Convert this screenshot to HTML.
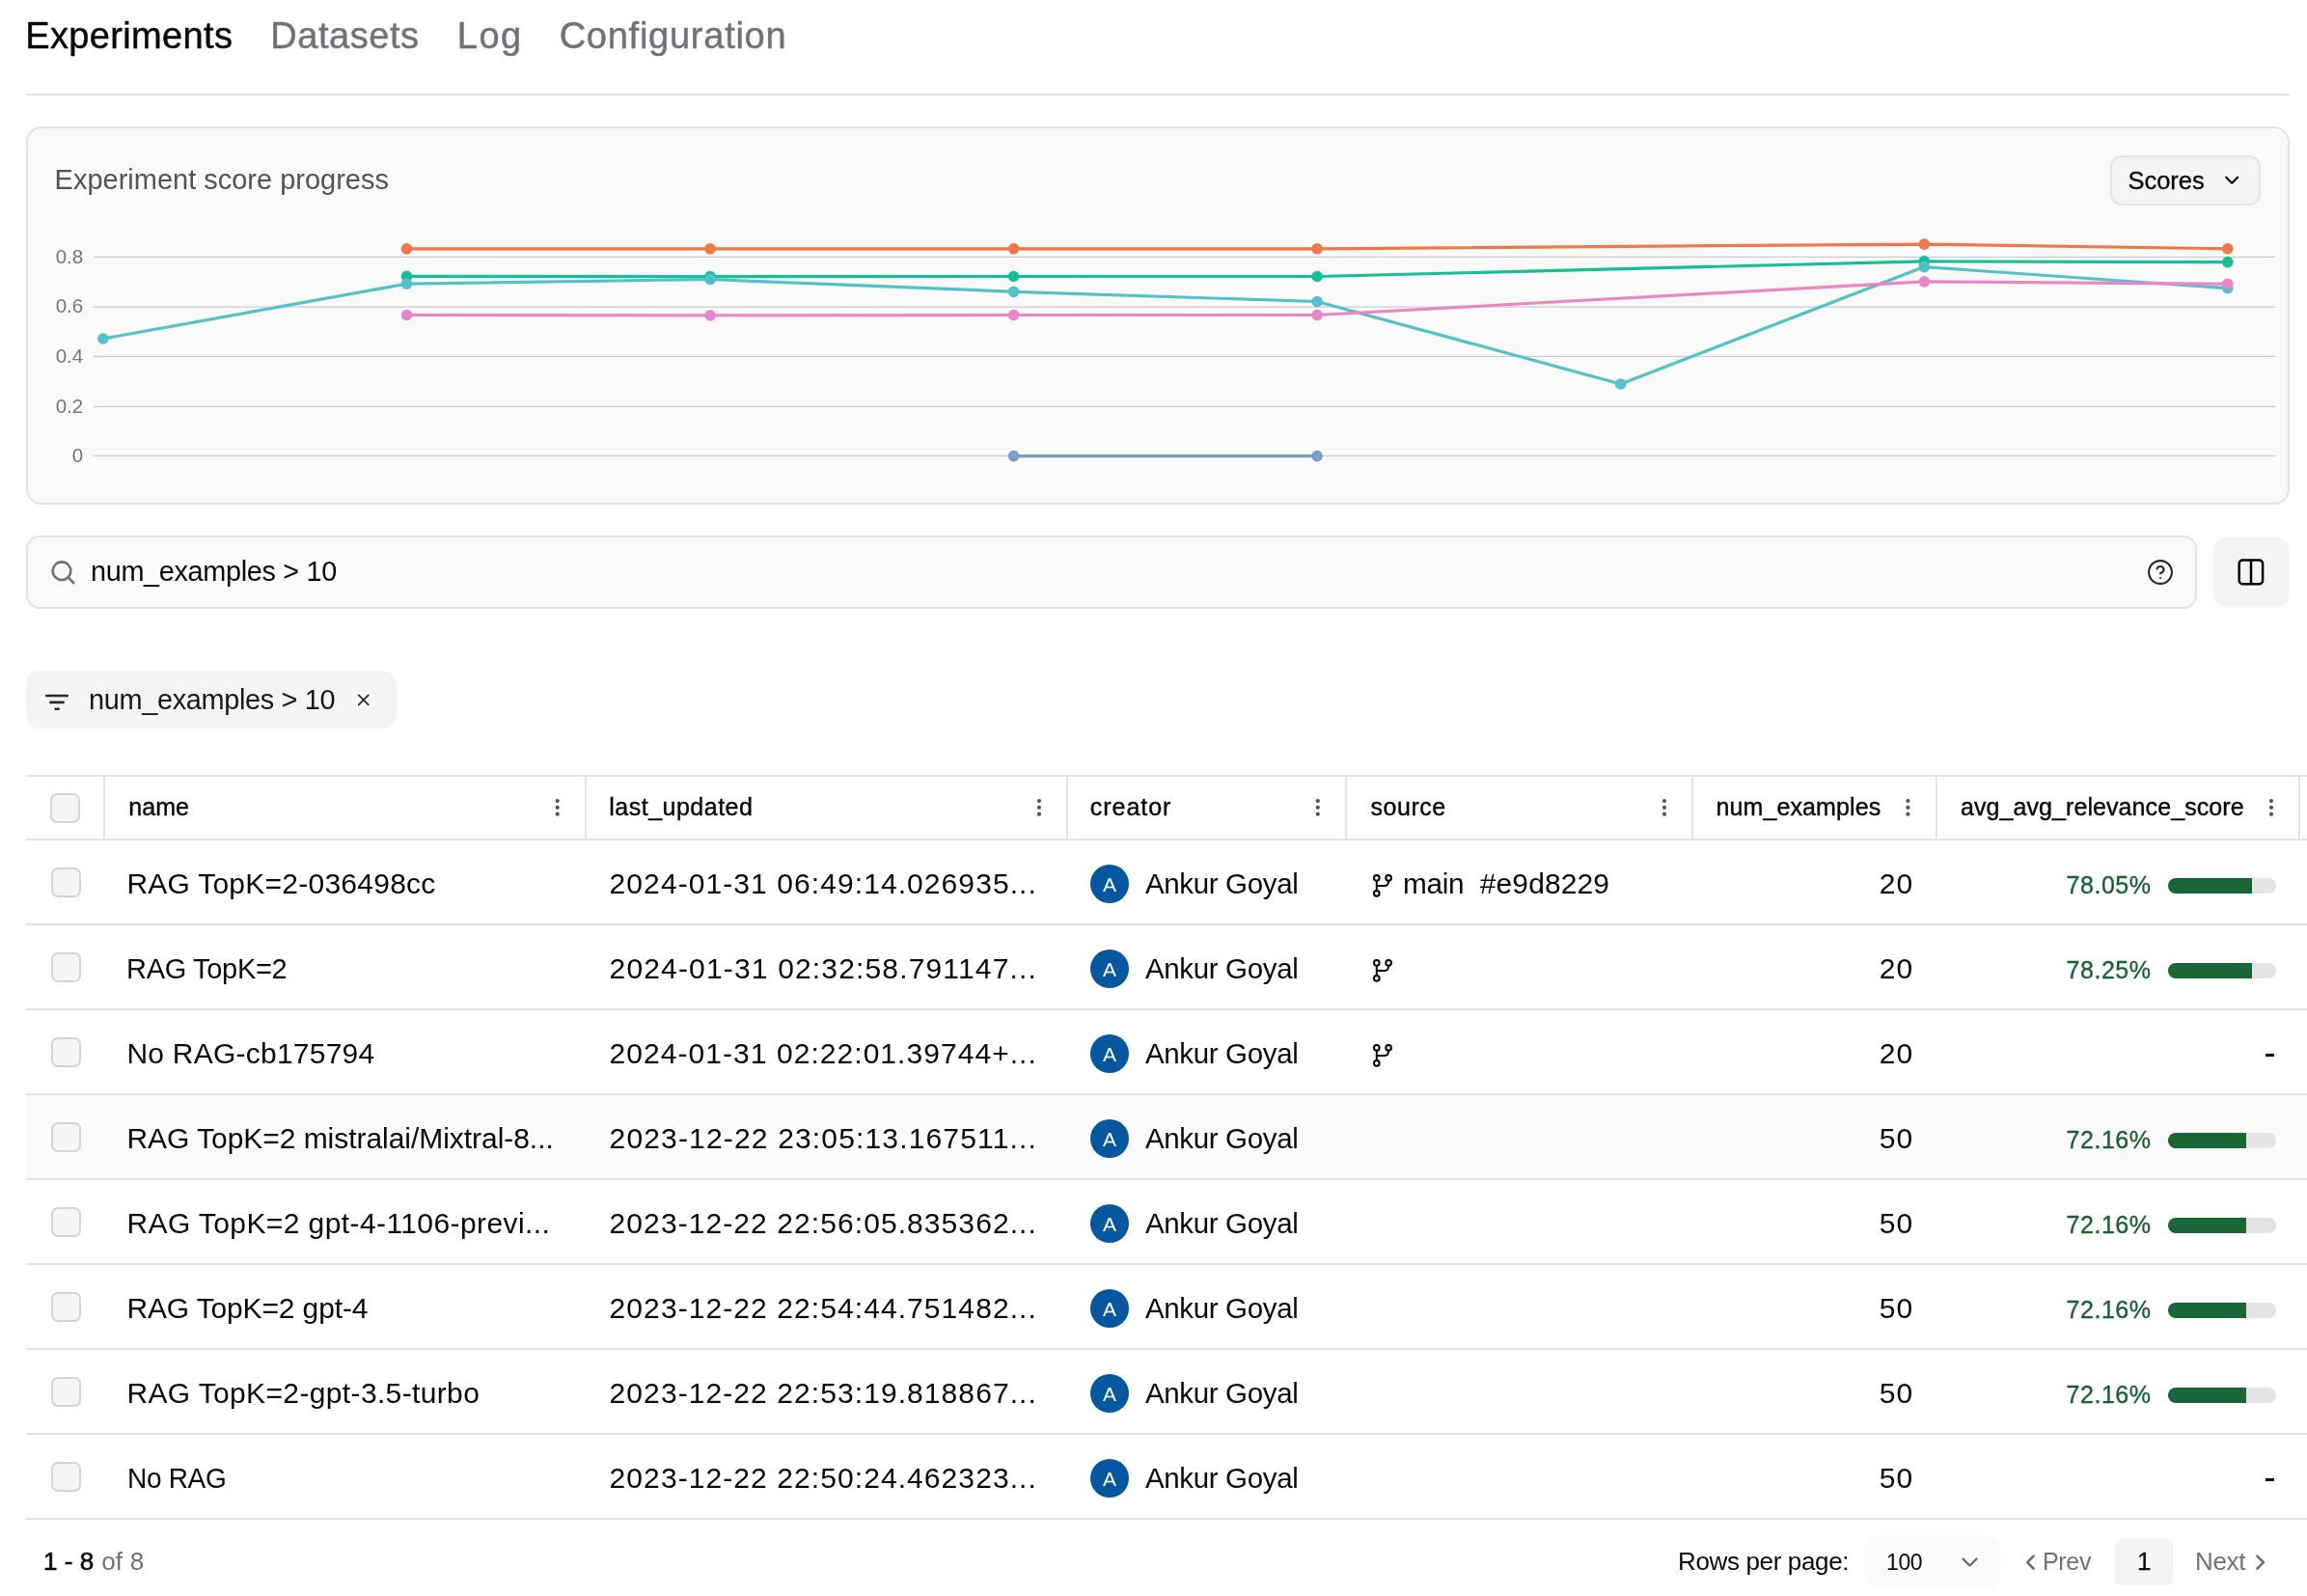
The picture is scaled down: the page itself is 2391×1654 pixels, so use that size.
<!DOCTYPE html>
<html><head><meta charset="utf-8"><title>Experiments</title>
<style>
html,body{margin:0;padding:0;overflow:hidden}
body{width:2391px;height:1654px;position:relative;overflow:hidden;background:#fff;font-family:"Liberation Sans",sans-serif;color:#09090b;-webkit-font-smoothing:antialiased}
#txt{position:absolute;left:0;top:0;width:2391px;height:1654px;will-change:transform}
</style></head><body>
<div style="position:absolute;left:27px;top:97px;width:2346px;height:2px;background:#e4e4e7"></div><div style="position:absolute;left:27px;top:131px;width:2346px;height:392px;box-sizing:border-box;border:2px solid #e4e4e7;border-radius:16px;background:#fafafa"></div><div style="position:absolute;left:2187px;top:161px;width:156px;height:52px;box-sizing:border-box;border:2px solid #e4e4e7;border-radius:12px;background:#f4f4f5"></div><div style="position:absolute;left:27px;top:555px;width:2250px;height:76px;box-sizing:border-box;border:2px solid #e4e4e7;border-radius:14px;background:#fafafa"></div><div style="position:absolute;left:2293px;top:557px;width:80px;height:72px;border-radius:14px;background:#f4f4f5"></div><div style="position:absolute;left:27px;top:695px;width:384px;height:60px;border-radius:14px;background:#f4f4f5"></div><div style="position:absolute;left:27px;top:803px;width:2364px;height:2px;background:#e4e4e7"></div><div style="position:absolute;left:27px;top:869px;width:2364px;height:2px;background:#e4e4e7"></div><div style="position:absolute;left:27px;top:957px;width:2364px;height:2px;background:#e4e4e7"></div><div style="position:absolute;left:27px;top:1045px;width:2364px;height:2px;background:#e4e4e7"></div><div style="position:absolute;left:27px;top:1133px;width:2364px;height:2px;background:#e4e4e7"></div><div style="position:absolute;left:27px;top:1221px;width:2364px;height:2px;background:#e4e4e7"></div><div style="position:absolute;left:27px;top:1309px;width:2364px;height:2px;background:#e4e4e7"></div><div style="position:absolute;left:27px;top:1397px;width:2364px;height:2px;background:#e4e4e7"></div><div style="position:absolute;left:27px;top:1485px;width:2364px;height:2px;background:#e4e4e7"></div><div style="position:absolute;left:27px;top:1573px;width:2364px;height:2px;background:#e4e4e7"></div><div style="position:absolute;left:27px;top:1135px;width:2364px;height:86px;background:#fafafa"></div><div style="position:absolute;left:107px;top:805px;width:2px;height:64px;background:#e4e4e7"></div><div style="position:absolute;left:606px;top:805px;width:2px;height:64px;background:#e4e4e7"></div><div style="position:absolute;left:1105px;top:805px;width:2px;height:64px;background:#e4e4e7"></div><div style="position:absolute;left:1394px;top:805px;width:2px;height:64px;background:#e4e4e7"></div><div style="position:absolute;left:1753px;top:805px;width:2px;height:64px;background:#e4e4e7"></div><div style="position:absolute;left:2006px;top:805px;width:2px;height:64px;background:#e4e4e7"></div><div style="position:absolute;left:2382px;top:805px;width:2px;height:64px;background:#e4e4e7"></div><div style="position:absolute;left:51.5px;top:821.5px;width:31px;height:31px;box-sizing:border-box;border:2px solid #d4d4d8;border-radius:7px;background:#f4f4f5"></div><div style="position:absolute;left:52.5px;top:898.5px;width:31px;height:31px;box-sizing:border-box;border:2px solid #d4d4d8;border-radius:7px;background:#f4f4f5"></div><div style="position:absolute;left:52.5px;top:986.5px;width:31px;height:31px;box-sizing:border-box;border:2px solid #d4d4d8;border-radius:7px;background:#f4f4f5"></div><div style="position:absolute;left:52.5px;top:1074.5px;width:31px;height:31px;box-sizing:border-box;border:2px solid #d4d4d8;border-radius:7px;background:#f4f4f5"></div><div style="position:absolute;left:52.5px;top:1162.5px;width:31px;height:31px;box-sizing:border-box;border:2px solid #d4d4d8;border-radius:7px;background:#f4f4f5"></div><div style="position:absolute;left:52.5px;top:1250.5px;width:31px;height:31px;box-sizing:border-box;border:2px solid #d4d4d8;border-radius:7px;background:#f4f4f5"></div><div style="position:absolute;left:52.5px;top:1338.5px;width:31px;height:31px;box-sizing:border-box;border:2px solid #d4d4d8;border-radius:7px;background:#f4f4f5"></div><div style="position:absolute;left:52.5px;top:1426.5px;width:31px;height:31px;box-sizing:border-box;border:2px solid #d4d4d8;border-radius:7px;background:#f4f4f5"></div><div style="position:absolute;left:52.5px;top:1514.5px;width:31px;height:31px;box-sizing:border-box;border:2px solid #d4d4d8;border-radius:7px;background:#f4f4f5"></div><div style="position:absolute;left:1129.7px;top:895.80px;width:40px;height:40px;border-radius:50%;background:#0558a0;color:#fff;font-size:21px;line-height:41.4px;text-align:center;will-change:transform">A</div><div style="position:absolute;left:1129.7px;top:983.80px;width:40px;height:40px;border-radius:50%;background:#0558a0;color:#fff;font-size:21px;line-height:41.4px;text-align:center;will-change:transform">A</div><div style="position:absolute;left:1129.7px;top:1071.80px;width:40px;height:40px;border-radius:50%;background:#0558a0;color:#fff;font-size:21px;line-height:41.4px;text-align:center;will-change:transform">A</div><div style="position:absolute;left:1129.7px;top:1159.80px;width:40px;height:40px;border-radius:50%;background:#0558a0;color:#fff;font-size:21px;line-height:41.4px;text-align:center;will-change:transform">A</div><div style="position:absolute;left:1129.7px;top:1247.80px;width:40px;height:40px;border-radius:50%;background:#0558a0;color:#fff;font-size:21px;line-height:41.4px;text-align:center;will-change:transform">A</div><div style="position:absolute;left:1129.7px;top:1335.80px;width:40px;height:40px;border-radius:50%;background:#0558a0;color:#fff;font-size:21px;line-height:41.4px;text-align:center;will-change:transform">A</div><div style="position:absolute;left:1129.7px;top:1423.80px;width:40px;height:40px;border-radius:50%;background:#0558a0;color:#fff;font-size:21px;line-height:41.4px;text-align:center;will-change:transform">A</div><div style="position:absolute;left:1129.7px;top:1511.80px;width:40px;height:40px;border-radius:50%;background:#0558a0;color:#fff;font-size:21px;line-height:41.4px;text-align:center;will-change:transform">A</div><div style="position:absolute;left:2246.6px;top:910px;width:112.3px;height:16px;border-radius:8px;background:#e4e4e7;overflow:hidden"><div style="width:87.65px;height:16px;background:#1b6637"></div></div><div style="position:absolute;left:2246.6px;top:998px;width:112.3px;height:16px;border-radius:8px;background:#e4e4e7;overflow:hidden"><div style="width:87.87px;height:16px;background:#1b6637"></div></div><div style="position:absolute;left:2246.6px;top:1174px;width:112.3px;height:16px;border-radius:8px;background:#e4e4e7;overflow:hidden"><div style="width:81.04px;height:16px;background:#1b6637"></div></div><div style="position:absolute;left:2246.6px;top:1262px;width:112.3px;height:16px;border-radius:8px;background:#e4e4e7;overflow:hidden"><div style="width:81.04px;height:16px;background:#1b6637"></div></div><div style="position:absolute;left:2246.6px;top:1350px;width:112.3px;height:16px;border-radius:8px;background:#e4e4e7;overflow:hidden"><div style="width:81.04px;height:16px;background:#1b6637"></div></div><div style="position:absolute;left:2246.6px;top:1438px;width:112.3px;height:16px;border-radius:8px;background:#e4e4e7;overflow:hidden"><div style="width:81.04px;height:16px;background:#1b6637"></div></div><div style="position:absolute;left:2348px;top:1092.2px;width:8.8px;height:2.6px;background:#09090b"></div><div style="position:absolute;left:2348px;top:1532.2px;width:8.8px;height:2.6px;background:#09090b"></div><div style="position:absolute;left:1932.3px;top:1591px;width:141px;height:55px;border-radius:14px;background:#fafafa"></div><div style="position:absolute;left:2191.8px;top:1595.3px;width:60px;height:47.4px;border-radius:6px;background:#f4f4f5"></div>
<svg style="position:absolute;left:0;top:0" width="2391" height="1654" viewBox="0 0 2391 1654"><line x1="97" y1="266.3" x2="2358" y2="266.3" stroke="#cdcdd1" stroke-width="1.2"/><line x1="97" y1="318.2" x2="2358" y2="318.2" stroke="#cdcdd1" stroke-width="1.2"/><line x1="97" y1="369.3" x2="2358" y2="369.3" stroke="#cdcdd1" stroke-width="1.2"/><line x1="97" y1="421.3" x2="2358" y2="421.3" stroke="#cdcdd1" stroke-width="1.2"/><line x1="97" y1="472.4" x2="2358" y2="472.4" stroke="#cdcdd1" stroke-width="1.2"/><path d="M421.5,257.9 L736.0,257.9 L1050.6,257.8 L1365.1,257.8 L1994.3,253.1 L2308.8,257.8" fill="none" stroke="#f07848" stroke-width="3.2" stroke-linejoin="round"/><circle cx="421.5" cy="257.9" r="5.8" fill="#f07848"/><circle cx="736.0" cy="257.9" r="5.8" fill="#f07848"/><circle cx="1050.6" cy="257.8" r="5.8" fill="#f07848"/><circle cx="1365.1" cy="257.8" r="5.8" fill="#f07848"/><circle cx="1994.3" cy="253.1" r="5.8" fill="#f07848"/><circle cx="2308.8" cy="257.8" r="5.8" fill="#f07848"/><path d="M421.5,286.4 L736.0,286.6 L1050.6,286.5 L1365.1,286.5 L1994.3,270.9 L2308.8,271.6" fill="none" stroke="#16bf99" stroke-width="3.2" stroke-linejoin="round"/><circle cx="421.5" cy="286.4" r="5.8" fill="#16bf99"/><circle cx="736.0" cy="286.6" r="5.8" fill="#16bf99"/><circle cx="1050.6" cy="286.5" r="5.8" fill="#16bf99"/><circle cx="1365.1" cy="286.5" r="5.8" fill="#16bf99"/><circle cx="1994.3" cy="270.9" r="5.8" fill="#16bf99"/><circle cx="2308.8" cy="271.6" r="5.8" fill="#16bf99"/><path d="M106.9,351 L421.5,294.1 L736.0,289.5 L1050.6,302.3 L1365.1,312.5 L1679.7,398 L1994.3,276.6 L2308.8,298.7" fill="none" stroke="#52c1ca" stroke-width="3.2" stroke-linejoin="round"/><circle cx="106.9" cy="351" r="5.8" fill="#52c1ca"/><circle cx="421.5" cy="294.1" r="5.8" fill="#52c1ca"/><circle cx="736.0" cy="289.5" r="5.8" fill="#52c1ca"/><circle cx="1050.6" cy="302.3" r="5.8" fill="#52c1ca"/><circle cx="1365.1" cy="312.5" r="5.8" fill="#52c1ca"/><circle cx="1679.7" cy="398" r="5.8" fill="#52c1ca"/><circle cx="1994.3" cy="276.6" r="5.8" fill="#52c1ca"/><circle cx="2308.8" cy="298.7" r="5.8" fill="#52c1ca"/><path d="M421.5,326.5 L736.0,326.8 L1050.6,326.5 L1365.1,326.5 L1994.3,291.9 L2308.8,294.2" fill="none" stroke="#e688c6" stroke-width="3.2" stroke-linejoin="round"/><circle cx="421.5" cy="326.5" r="5.8" fill="#e688c6"/><circle cx="736.0" cy="326.8" r="5.8" fill="#e688c6"/><circle cx="1050.6" cy="326.5" r="5.8" fill="#e688c6"/><circle cx="1365.1" cy="326.5" r="5.8" fill="#e688c6"/><circle cx="1994.3" cy="291.9" r="5.8" fill="#e688c6"/><circle cx="2308.8" cy="294.2" r="5.8" fill="#e688c6"/><path d="M1050.6,472.6 L1365.1,472.6" fill="none" stroke="#7b9fcc" stroke-width="3.2" stroke-linejoin="round"/><circle cx="1050.6" cy="472.6" r="5.8" fill="#7b9fcc"/><circle cx="1365.1" cy="472.6" r="5.8" fill="#7b9fcc"/><path d="M2307.2,183.8 L2313.2,189.8 L2319.2,183.8" fill="none" stroke="#09090b" stroke-width="2.1" stroke-linecap="round" stroke-linejoin="round"/><circle cx="64" cy="591.7" r="9.3" fill="none" stroke="#71717a" stroke-width="2.6"/><path d="M71,598.7 L76.2,604" stroke="#71717a" stroke-width="2.6" stroke-linecap="round"/><g transform="translate(2224.72,578.72) scale(1.19)" fill="none" stroke="#27272a" stroke-width="1.75" stroke-linecap="round" stroke-linejoin="round"><circle cx="12" cy="12" r="10"/><path d="M9.09 9a3 3 0 0 1 5.83 1c0 2-3 3-3 3"/><path d="M12 17h.01"/></g><rect x="2320.7" y="580.6" width="24.4" height="24.6" rx="3.5" fill="none" stroke="#000" stroke-width="2.5"/><line x1="2333" y1="580.6" x2="2333" y2="605.2" stroke="#000" stroke-width="2.5"/><path d="M48.2,721 H69.8 M52.5,727.9 H65.5 M57.7,734.8 H60.7" stroke="#27272a" stroke-width="2.6" stroke-linecap="round"/><path d="M371.7,720.3 L381.8,730.4 M381.8,720.3 L371.7,730.4" stroke="#27272a" stroke-width="1.7" stroke-linecap="round"/><circle cx="577.7" cy="830" r="2.1" fill="#52525b"/><circle cx="577.7" cy="836.8" r="2.1" fill="#52525b"/><circle cx="577.7" cy="843.7" r="2.1" fill="#52525b"/><circle cx="1077" cy="830" r="2.1" fill="#52525b"/><circle cx="1077" cy="836.8" r="2.1" fill="#52525b"/><circle cx="1077" cy="843.7" r="2.1" fill="#52525b"/><circle cx="1365.8" cy="830" r="2.1" fill="#52525b"/><circle cx="1365.8" cy="836.8" r="2.1" fill="#52525b"/><circle cx="1365.8" cy="843.7" r="2.1" fill="#52525b"/><circle cx="1725" cy="830" r="2.1" fill="#52525b"/><circle cx="1725" cy="836.8" r="2.1" fill="#52525b"/><circle cx="1725" cy="843.7" r="2.1" fill="#52525b"/><circle cx="1977.4" cy="830" r="2.1" fill="#52525b"/><circle cx="1977.4" cy="836.8" r="2.1" fill="#52525b"/><circle cx="1977.4" cy="843.7" r="2.1" fill="#52525b"/><circle cx="2354" cy="830" r="2.1" fill="#52525b"/><circle cx="2354" cy="836.8" r="2.1" fill="#52525b"/><circle cx="2354" cy="843.7" r="2.1" fill="#52525b"/><g fill="none" stroke="#000" stroke-width="2"><circle cx="1426.8" cy="909.9000000000001" r="2.8"/><circle cx="1439.1" cy="909.9000000000001" r="2.8"/><circle cx="1426.8" cy="925.9000000000001" r="2.8"/><path d="M1426.8,912.7 V923.1000000000001 M1426.8,917.9000000000001 H1435.1 Q1439.1,917.9000000000001 1439.1,912.7"/></g><g fill="none" stroke="#000" stroke-width="2"><circle cx="1426.8" cy="997.9000000000001" r="2.8"/><circle cx="1439.1" cy="997.9000000000001" r="2.8"/><circle cx="1426.8" cy="1013.9000000000001" r="2.8"/><path d="M1426.8,1000.7 V1011.1000000000001 M1426.8,1005.9000000000001 H1435.1 Q1439.1,1005.9000000000001 1439.1,1000.7"/></g><g fill="none" stroke="#000" stroke-width="2"><circle cx="1426.8" cy="1085.9" r="2.8"/><circle cx="1439.1" cy="1085.9" r="2.8"/><circle cx="1426.8" cy="1101.9" r="2.8"/><path d="M1426.8,1088.7 V1099.1000000000001 M1426.8,1093.9 H1435.1 Q1439.1,1093.9 1439.1,1088.7"/></g><path d="M2034.5,1615.5 L2041.5,1622.5 L2048.5,1615.5" fill="none" stroke="#6b6b73" stroke-width="2.4" stroke-linecap="round" stroke-linejoin="round"/><path d="M2107.6,1612.6 L2101.1,1619.1 L2107.6,1625.6" fill="none" stroke="#6b6b73" stroke-width="2.6" stroke-linecap="round" stroke-linejoin="round"/><path d="M2339.4,1612.6 L2345.9,1619.1 L2339.4,1625.6" fill="none" stroke="#6b6b73" stroke-width="2.6" stroke-linecap="round" stroke-linejoin="round"/></svg>
<div id="txt"><div style="position:absolute;left:26.30px;top:17.83px;font-size:38px;line-height:38px;color:#09090b;white-space:pre;letter-spacing:0.351px;-webkit-text-stroke:0.45px #09090b;">Experiments</div><div style="position:absolute;left:280.30px;top:17.83px;font-size:38px;line-height:38px;color:#71717a;white-space:pre;letter-spacing:0.534px;-webkit-text-stroke:0.45px #71717a;">Datasets</div><div style="position:absolute;left:473.80px;top:17.83px;font-size:38px;line-height:38px;color:#71717a;white-space:pre;letter-spacing:1.466px;-webkit-text-stroke:0.45px #71717a;">Log</div><div style="position:absolute;left:579.70px;top:17.83px;font-size:38px;line-height:38px;color:#71717a;white-space:pre;letter-spacing:0.742px;-webkit-text-stroke:0.45px #71717a;">Configuration</div><div style="position:absolute;left:56.60px;top:172.45px;font-size:29px;line-height:29px;color:#52525b;white-space:pre;letter-spacing:-0.009px;">Experiment score progress</div><div style="position:absolute;left:2205.40px;top:174.71px;font-size:25.5px;line-height:25.5px;color:#09090b;white-space:pre;letter-spacing:-0.003px;-webkit-text-stroke:0.3px #09090b;">Scores</div><div style="position:absolute;left:57.70px;top:255.55px;font-size:20.5px;line-height:20.5px;color:#76767c;white-space:pre;">0.8</div><div style="position:absolute;left:57.70px;top:307.45px;font-size:20.5px;line-height:20.5px;color:#76767c;white-space:pre;">0.6</div><div style="position:absolute;left:57.70px;top:358.55px;font-size:20.5px;line-height:20.5px;color:#76767c;white-space:pre;">0.4</div><div style="position:absolute;left:57.70px;top:410.55px;font-size:20.5px;line-height:20.5px;color:#76767c;white-space:pre;">0.2</div><div style="position:absolute;left:74.80px;top:461.65px;font-size:20.5px;line-height:20.5px;color:#76767c;white-space:pre;">0</div><div style="position:absolute;left:93.60px;top:578.45px;font-size:29px;line-height:29px;color:#09090b;white-space:pre;letter-spacing:-0.350px;transform:scaleX(0.9955);transform-origin:0 0;">num_examples &gt; 10</div><div style="position:absolute;left:91.50px;top:710.75px;font-size:29px;line-height:29px;color:#18181b;white-space:pre;letter-spacing:-0.350px;transform:scaleX(0.9971);transform-origin:0 0;">num_examples &gt; 10</div><div style="position:absolute;left:133.30px;top:824.04px;font-size:25px;line-height:25px;color:#09090b;white-space:pre;letter-spacing:0.056px;-webkit-text-stroke:0.4px #09090b;">name</div><div style="position:absolute;left:631.30px;top:824.04px;font-size:25px;line-height:25px;color:#09090b;white-space:pre;letter-spacing:0.493px;-webkit-text-stroke:0.4px #09090b;">last_updated</div><div style="position:absolute;left:1129.80px;top:824.04px;font-size:25px;line-height:25px;color:#09090b;white-space:pre;letter-spacing:0.953px;-webkit-text-stroke:0.4px #09090b;">creator</div><div style="position:absolute;left:1420.60px;top:824.04px;font-size:25px;line-height:25px;color:#09090b;white-space:pre;letter-spacing:0.513px;-webkit-text-stroke:0.4px #09090b;">source</div><div style="position:absolute;left:1778.50px;top:824.04px;font-size:25px;line-height:25px;color:#09090b;white-space:pre;letter-spacing:0.106px;-webkit-text-stroke:0.4px #09090b;">num_examples</div><div style="position:absolute;left:2031.90px;top:824.04px;font-size:25px;line-height:25px;color:#09090b;white-space:pre;letter-spacing:0.084px;-webkit-text-stroke:0.4px #09090b;">avg_avg_relevance_score</div><div style="position:absolute;left:131.40px;top:900.61px;font-size:30px;line-height:30px;color:#09090b;white-space:pre;letter-spacing:0.249px;">RAG TopK=2-036498cc</div><div style="position:absolute;left:631.60px;top:900.61px;font-size:30px;line-height:30px;color:#09090b;white-space:pre;letter-spacing:1.079px;">2024-01-31 06:49:14.026935...</div><div style="position:absolute;left:1186.70px;top:900.61px;font-size:30px;line-height:30px;color:#09090b;white-space:pre;letter-spacing:-0.350px;transform:scaleX(0.9824);transform-origin:0 0;">Ankur Goyal</div><div style="position:absolute;left:1454.21px;top:900.61px;font-size:30px;line-height:30px;color:#09090b;white-space:pre;letter-spacing:-0.350px;transform:scaleX(0.9935);transform-origin:0 0;">main</div><div style="position:absolute;left:1533.80px;top:900.61px;font-size:30px;line-height:30px;color:#09090b;white-space:pre;letter-spacing:0.101px;">#e9d8229</div><div style="position:absolute;left:1947.70px;top:900.61px;font-size:30px;line-height:30px;color:#09090b;white-space:pre;letter-spacing:1.015px;">20</div><div style="position:absolute;left:2141.50px;top:905.14px;font-size:25px;line-height:25px;color:#166130;white-space:pre;letter-spacing:0.548px;-webkit-text-stroke:0.35px #166130;">78.05%</div><div style="position:absolute;left:131.46px;top:988.61px;font-size:30px;line-height:30px;color:#09090b;white-space:pre;letter-spacing:-0.350px;transform:scaleX(0.9677);transform-origin:0 0;">RAG TopK=2</div><div style="position:absolute;left:631.60px;top:988.61px;font-size:30px;line-height:30px;color:#09090b;white-space:pre;letter-spacing:1.159px;">2024-01-31 02:32:58.791147...</div><div style="position:absolute;left:1186.70px;top:988.61px;font-size:30px;line-height:30px;color:#09090b;white-space:pre;letter-spacing:-0.350px;transform:scaleX(0.9824);transform-origin:0 0;">Ankur Goyal</div><div style="position:absolute;left:1947.70px;top:988.61px;font-size:30px;line-height:30px;color:#09090b;white-space:pre;letter-spacing:1.015px;">20</div><div style="position:absolute;left:2141.50px;top:993.14px;font-size:25px;line-height:25px;color:#166130;white-space:pre;letter-spacing:0.548px;-webkit-text-stroke:0.35px #166130;">78.25%</div><div style="position:absolute;left:131.40px;top:1076.61px;font-size:30px;line-height:30px;color:#09090b;white-space:pre;letter-spacing:0.236px;">No RAG-cb175794</div><div style="position:absolute;left:631.60px;top:1076.61px;font-size:30px;line-height:30px;color:#09090b;white-space:pre;letter-spacing:1.049px;">2024-01-31 02:22:01.39744+...</div><div style="position:absolute;left:1186.70px;top:1076.61px;font-size:30px;line-height:30px;color:#09090b;white-space:pre;letter-spacing:-0.350px;transform:scaleX(0.9824);transform-origin:0 0;">Ankur Goyal</div><div style="position:absolute;left:1947.70px;top:1076.61px;font-size:30px;line-height:30px;color:#09090b;white-space:pre;letter-spacing:1.015px;">20</div><div style="position:absolute;left:131.40px;top:1164.61px;font-size:30px;line-height:30px;color:#09090b;white-space:pre;letter-spacing:-0.042px;">RAG TopK=2 mistralai/Mixtral-8...</div><div style="position:absolute;left:631.60px;top:1164.61px;font-size:30px;line-height:30px;color:#09090b;white-space:pre;letter-spacing:1.159px;">2023-12-22 23:05:13.167511...</div><div style="position:absolute;left:1186.70px;top:1164.61px;font-size:30px;line-height:30px;color:#09090b;white-space:pre;letter-spacing:-0.350px;transform:scaleX(0.9824);transform-origin:0 0;">Ankur Goyal</div><div style="position:absolute;left:1947.70px;top:1164.61px;font-size:30px;line-height:30px;color:#09090b;white-space:pre;letter-spacing:1.015px;">50</div><div style="position:absolute;left:2141.50px;top:1169.14px;font-size:25px;line-height:25px;color:#166130;white-space:pre;letter-spacing:0.548px;-webkit-text-stroke:0.35px #166130;">72.16%</div><div style="position:absolute;left:131.40px;top:1252.61px;font-size:30px;line-height:30px;color:#09090b;white-space:pre;letter-spacing:0.406px;">RAG TopK=2 gpt-4-1106-previ...</div><div style="position:absolute;left:631.60px;top:1252.61px;font-size:30px;line-height:30px;color:#09090b;white-space:pre;letter-spacing:1.079px;">2023-12-22 22:56:05.835362...</div><div style="position:absolute;left:1186.70px;top:1252.61px;font-size:30px;line-height:30px;color:#09090b;white-space:pre;letter-spacing:-0.350px;transform:scaleX(0.9824);transform-origin:0 0;">Ankur Goyal</div><div style="position:absolute;left:1947.70px;top:1252.61px;font-size:30px;line-height:30px;color:#09090b;white-space:pre;letter-spacing:1.015px;">50</div><div style="position:absolute;left:2141.50px;top:1257.14px;font-size:25px;line-height:25px;color:#166130;white-space:pre;letter-spacing:0.548px;-webkit-text-stroke:0.35px #166130;">72.16%</div><div style="position:absolute;left:131.40px;top:1340.61px;font-size:30px;line-height:30px;color:#09090b;white-space:pre;letter-spacing:-0.137px;">RAG TopK=2 gpt-4</div><div style="position:absolute;left:631.60px;top:1340.61px;font-size:30px;line-height:30px;color:#09090b;white-space:pre;letter-spacing:1.079px;">2023-12-22 22:54:44.751482...</div><div style="position:absolute;left:1186.70px;top:1340.61px;font-size:30px;line-height:30px;color:#09090b;white-space:pre;letter-spacing:-0.350px;transform:scaleX(0.9824);transform-origin:0 0;">Ankur Goyal</div><div style="position:absolute;left:1947.70px;top:1340.61px;font-size:30px;line-height:30px;color:#09090b;white-space:pre;letter-spacing:1.015px;">50</div><div style="position:absolute;left:2141.50px;top:1345.14px;font-size:25px;line-height:25px;color:#166130;white-space:pre;letter-spacing:0.548px;-webkit-text-stroke:0.35px #166130;">72.16%</div><div style="position:absolute;left:131.40px;top:1428.61px;font-size:30px;line-height:30px;color:#09090b;white-space:pre;letter-spacing:0.361px;">RAG TopK=2-gpt-3.5-turbo</div><div style="position:absolute;left:631.60px;top:1428.61px;font-size:30px;line-height:30px;color:#09090b;white-space:pre;letter-spacing:1.079px;">2023-12-22 22:53:19.818867...</div><div style="position:absolute;left:1186.70px;top:1428.61px;font-size:30px;line-height:30px;color:#09090b;white-space:pre;letter-spacing:-0.350px;transform:scaleX(0.9824);transform-origin:0 0;">Ankur Goyal</div><div style="position:absolute;left:1947.70px;top:1428.61px;font-size:30px;line-height:30px;color:#09090b;white-space:pre;letter-spacing:1.015px;">50</div><div style="position:absolute;left:2141.50px;top:1433.14px;font-size:25px;line-height:25px;color:#166130;white-space:pre;letter-spacing:0.548px;-webkit-text-stroke:0.35px #166130;">72.16%</div><div style="position:absolute;left:131.53px;top:1516.61px;font-size:30px;line-height:30px;color:#09090b;white-space:pre;letter-spacing:-0.350px;transform:scaleX(0.9343);transform-origin:0 0;">No RAG</div><div style="position:absolute;left:631.60px;top:1516.61px;font-size:30px;line-height:30px;color:#09090b;white-space:pre;letter-spacing:1.079px;">2023-12-22 22:50:24.462323...</div><div style="position:absolute;left:1186.70px;top:1516.61px;font-size:30px;line-height:30px;color:#09090b;white-space:pre;letter-spacing:-0.350px;transform:scaleX(0.9824);transform-origin:0 0;">Ankur Goyal</div><div style="position:absolute;left:1947.70px;top:1516.61px;font-size:30px;line-height:30px;color:#09090b;white-space:pre;letter-spacing:1.015px;">50</div><div style="position:absolute;left:45.10px;top:1604.99px;font-size:26px;line-height:26px;color:#09090b;white-space:pre;letter-spacing:0.009px;-webkit-text-stroke:0.6px #09090b;">1 - 8</div><div style="position:absolute;left:105.20px;top:1604.99px;font-size:26px;line-height:26px;color:#71717a;white-space:pre;letter-spacing:0.198px;">of 8</div><div style="position:absolute;left:1739.00px;top:1604.99px;font-size:26px;line-height:26px;color:#09090b;white-space:pre;letter-spacing:-0.350px;transform:scaleX(0.9998);transform-origin:0 0;">Rows per page:</div><div style="position:absolute;left:1955.20px;top:1607.53px;font-size:23px;line-height:23px;color:#09090b;white-space:pre;letter-spacing:-0.350px;transform:scaleX(0.9977);transform-origin:0 0;">100</div><div style="position:absolute;left:2116.58px;top:1604.99px;font-size:26px;line-height:26px;color:#71717a;white-space:pre;letter-spacing:-0.350px;transform:scaleX(0.9621);transform-origin:0 0;">Prev</div><div style="position:absolute;left:2215.00px;top:1604.99px;font-size:26px;line-height:26px;color:#09090b;white-space:pre;-webkit-text-stroke:0.3px #09090b;">1</div><div style="position:absolute;left:2275.00px;top:1604.99px;font-size:26px;line-height:26px;color:#71717a;white-space:pre;letter-spacing:-0.345px;">Next</div></div>
</body></html>
